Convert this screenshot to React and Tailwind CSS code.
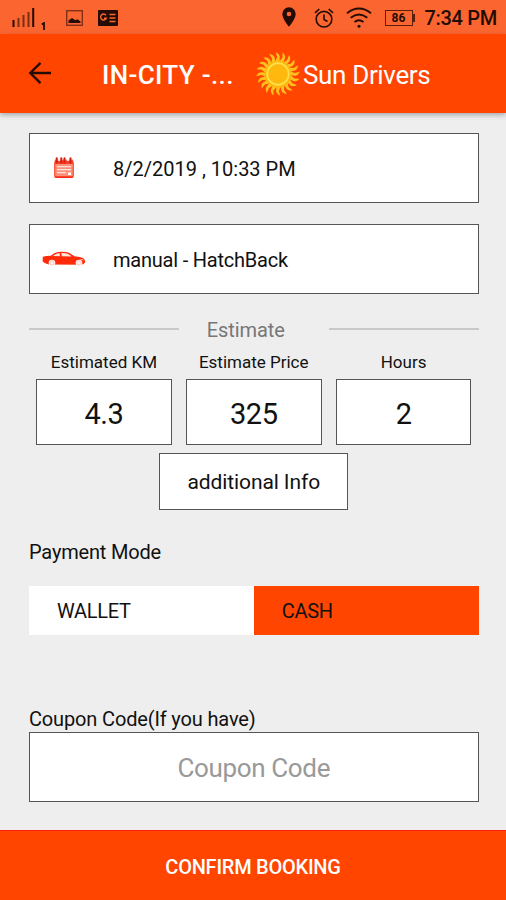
import React, { useState } from 'react';

const estimates = [
  { label: 'Estimated KM', value: '4.3' },
  { label: 'Estimate Price', value: '325' },
  { label: 'Hours', value: '2' },
];

const rays = Array.from({ length: 20 }, (_, i) => i * 18);

function SunIcon() {
  return (
    <svg className="mt-px h-[46px] w-[46px] shrink-0" viewBox="-23 -23 46 46">
      {rays.map((angle) => (
        <path
          key={angle}
          transform={`rotate(${angle})`}
          d="M-2.3 -11 C-3.2 -14.5 0.2 -16 -1.4 -18.6 L-2.2 -21.8 C1.8 -20 2.2 -17.2 1.7 -15.5 C1.3 -14 2 -13 2.3 -11 Z"
          fill="#ffc01e"
        />
      ))}
      <circle r="12.8" fill="#ffb300" />
      <circle r="10.8" fill="#ffb90e" stroke="#ffe04e" strokeWidth="1.7" />
    </svg>
  );
}

function CalendarIcon() {
  return (
    <svg className="h-[23px] w-[22px]" viewBox="0 0 22 23" fill="none">
      <path d="M2 3.5h18v16.200q0 1.800-1.800 1.800H3.800Q2 21.500 2 19.700z" fill="#ff8f78" />
      <path d="M1.500 4.500h19v3.500h-19z" fill="#f5402a" />
      <path d="M1.700 7v12.500q0 2 2 2h14.600q2 0 2-2V7" stroke="#ff4a2b" strokeWidth="1.200" />
      <path d="M4 10.700h14M4 13.700h14M4 16.700h9" stroke="#ffe3db" strokeWidth="1.300" />
      <path d="M15 16.500h3v2.500h-3z" fill="#fff" />
      <path d="M2.500 21h17" stroke="#f5260c" strokeWidth="1.400" />
      <path d="M6.200 1v4M15 1v4" stroke="#fff" strokeWidth="1.600" />
      <path d="M3.700 6.500V2.300M8.300 6.500V2.300M11.500 6.500V2.300M17.500 6.500V2.300" stroke="#d51e14" strokeWidth="2" strokeLinecap="round" />
    </svg>
  );
}

function CarIcon() {
  return (
    <svg className="h-4 w-[44px]" viewBox="0 0 44 16">
      <path
        d="M.8 5.800Q4 4.700 8.800 4.700Q12 1.800 16 1Q23 .3 27.500 2L32.500 5.300Q40 6 42.300 8L43.300 11Q42 13.800 39 13.800L7 13.500Q1.500 12.300.6 10Z"
        fill="#ff2a08"
      />
      <path d="M11 4.900Q13.500 2.500 17.500 2.100L18 5.200Z M19.200 2L24 2.200Q27 2.800 29.500 5.400L19.800 5.300Z" fill="#ffe3dc" />
      <path d="M38.500 8.300l3 .6" stroke="#ffc5b8" strokeWidth=".9" />
      <circle cx="10" cy="12" r="3.300" fill="#fff" />
      <circle cx="10" cy="12" r="2.100" fill="#fff0ed" stroke="#ffa593" strokeWidth=".6" />
      <circle cx="37" cy="12" r="3.300" fill="#fff" />
      <circle cx="37" cy="12" r="2.100" fill="#fff0ed" stroke="#ffa593" strokeWidth=".6" />
    </svg>
  );
}

function StatusBar() {
  return (
    <div className="flex h-[34px] shrink-0 items-center bg-[#fb6630] pr-[9px] pl-3 text-[#240c04]">
      {/* Signal strength */}
      <svg className="mt-px h-5 w-[23px]" viewBox="0 0 23 20" stroke="currentColor" strokeWidth="2">
        <path d="M1.500 12v7" />
        <path d="M6.500 10v9M11.500 7v12M16.500 4v15" opacity=".6" />
        <path d="M21.200 0v19" />
      </svg>
      <svg className="mt-[17px] ml-1.5 h-2 w-1.5" viewBox="0 0 6 8" fill="none" stroke="currentColor" strokeWidth="1.800">
        <path d="M.8 2.500L3 1v7" />
      </svg>
      {/* Notifications */}
      <svg className="mt-px ml-[18px] h-[18px] w-[19px]" viewBox="0 0 19 18">
        <rect x="1.700" y="1.700" width="15.600" height="14.600" fill="none" stroke="#842e17" strokeWidth="1.400" />
        <path d="M3.500 14V11.500l3.500-2.500 3.500 2.200 2-1 3 2.300V14z" fill="currentColor" />
      </svg>
      <svg className="mt-px ml-[14px] h-4 w-5" viewBox="0 0 20 16">
        <rect width="20" height="16" rx="1" fill="currentColor" />
        <path d="M8 5.200A3 3 0 1 0 8.400 8.200H6M11.500 4.500h6M11.500 8h6M11.500 11.500h6" fill="none" stroke="#fb6630" strokeWidth="1.400" />
      </svg>
      <div className="grow" />
      {/* Location */}
      <svg className="h-5 w-3.5" viewBox="0 0 14 20" fill="currentColor">
        <path fillRule="evenodd" d="M7 .3A6.700 6.700 0 0 0 .3 7C.3 12 7 19.700 7 19.700S13.700 12 13.700 7A6.700 6.700 0 0 0 7 .3zM7 4.700a2.300 2.300 0 1 1 0 4.600 2.300 2.300 0 0 1 0-4.600z" />
      </svg>
      {/* Alarm */}
      <svg className="mt-px ml-[18px] h-5 w-5" viewBox="0 0 20 20" fill="none" stroke="currentColor" strokeWidth="1.600">
        <circle cx="10" cy="11.200" r="7.800" />
        <path d="M10 6.500v5l3.500 2M1 4.800L5.300 1M19 4.800L14.700 1" />
      </svg>
      {/* Wifi */}
      <svg className="mt-0.5 ml-3 h-[22px] w-[26px]" viewBox="0 0 26 22" fill="none" stroke="currentColor" strokeWidth="1.900">
        <path d="M1 6.200Q13-3.200 25 6.200M4.700 10.800Q13 4 21.300 10.800M8.500 15Q13 11.300 17.500 15" />
        <circle cx="13" cy="19.300" r="1.500" fill="currentColor" stroke="none" />
      </svg>
      {/* Battery */}
      <div className="mt-px ml-[13px] flex items-center">
        <div className="flex h-4 w-[28px] items-center justify-center border-[1.5px] border-[#5a200c] text-xs font-bold">
          86
        </div>
        <div className="h-2 w-0.5 bg-[#5a200c]" />
      </div>
      <span className="mt-0.5 ml-[10px] text-[20px] font-medium tracking-[-0.3px] whitespace-nowrap">7:34 PM</span>
    </div>
  );
}

function Header() {
  return (
    <header className="z-10 flex h-[78.500px] shrink-0 items-center bg-[#ff4500] pl-7 text-white shadow-[0_2px_5px_rgba(0,0,0,0.3)]">
      <button className="h-6 w-6">
        <svg className="h-6 w-6" viewBox="0 0 24 24" fill="none" stroke="#240c04" strokeWidth="2.400">
          <path d="M23 12H2.500M12.500 1.800L2.300 12l10.200 10.200" />
        </svg>
      </button>
      <h1 className="mt-1 ml-[50px] w-[134px] text-[26px] font-medium tracking-[0.35px] whitespace-nowrap">IN-CITY -...</h1>
      <div className="ml-[19px] flex items-center">
        <SunIcon />
        <span className="mt-1 ml-0.5 text-[26px] tracking-[-0.35px] whitespace-nowrap">Sun Drivers</span>
      </div>
    </header>
  );
}

export default function App() {
  const [mode, setMode] = useState('CASH');

  return (
    <div className="flex h-[900px] w-[506px] flex-col overflow-hidden bg-[#eeeeee] font-['Roboto',sans-serif] text-[#111]">
      <StatusBar />
      <Header />

      <main className="flex grow flex-col pt-5 pr-[27.5px] pl-[29px]">
        <div className="flex h-[70px] shrink-0 items-center border border-[#555] bg-white text-[20px]">
          <div className="flex w-[83px] pl-[23px]">
            <CalendarIcon />
          </div>
          <span className="mt-0.5">8/2/2019 , 10:33 PM</span>
        </div>

        <div className="mt-[21px] flex h-[70px] shrink-0 items-center border border-[#555] bg-white text-[20px]">
          <div className="flex w-[83px] pl-3">
            <CarIcon />
          </div>
          <span className="mt-0.5 tracking-[-0.22px]">manual - HatchBack</span>
        </div>

        {/* Estimate */}
        <div className="mt-[22px] flex h-7 shrink-0 items-center text-[20px] text-[#777]">
          <div className="mb-0.5 h-0.5 grow bg-[#c9c9c9]" />
          <span className="w-[150px] pr-4 text-center tracking-[-0.1px]">Estimate</span>
          <div className="mb-0.5 h-0.5 grow bg-[#c9c9c9]" />
        </div>
        <div className="grid shrink-0 grid-cols-3">
          {estimates.map((item) => (
            <div key={item.label} className="flex flex-col px-[7px] text-center">
              <span className="mt-1.5 h-6 text-[17px] leading-6 whitespace-nowrap">{item.label}</span>
              <div className="mt-[5px] flex h-[66px] items-center justify-center border border-[#555] bg-white pt-[6px] text-[29px] tracking-[-0.5px]">
                {item.value}
              </div>
            </div>
          ))}
        </div>
        <button className="mt-2 h-[57px] w-[189px] shrink-0 self-center border border-[#555] bg-white pt-[3px] text-[21px] tracking-[-0.1px]">
          additional Info
        </button>

        {/* Payment */}
        <h2 className="mt-7 shrink-0 text-[20px] leading-7 tracking-[-0.18px]">Payment Mode</h2>
        <div className="mt-5 flex h-[49px] shrink-0 text-[20px] tracking-[-0.3px]">
          {['WALLET', 'CASH'].map((item) => (
            <button
              key={item}
              onClick={() => setMode(item)}
              className={`w-1/2 pt-0.5 pl-7 text-left ${mode === item ? 'bg-[#ff4500]' : 'bg-white'}`}
            >
              {item}
            </button>
          ))}
        </div>

        {/* Coupon */}
        <label htmlFor="coupon" className="mt-[70px] shrink-0 text-[20px] leading-7 tracking-[-0.15px]">
          Coupon Code(If you have)
        </label>
        <input
          id="coupon"
          placeholder="Coupon Code"
          className="-mt-px h-[70px] w-full shrink-0 border border-[#555] bg-white pt-0.5 text-center text-[26px] tracking-[-0.35px] placeholder:text-[#999]"
        />
      </main>

      <button className="h-[70px] shrink-0 border-t border-[#ff1c0c] bg-[#ff4500] pt-0.5 text-[20px] font-medium tracking-[-0.25px] text-white">
        CONFIRM BOOKING
      </button>
    </div>
  );
}
